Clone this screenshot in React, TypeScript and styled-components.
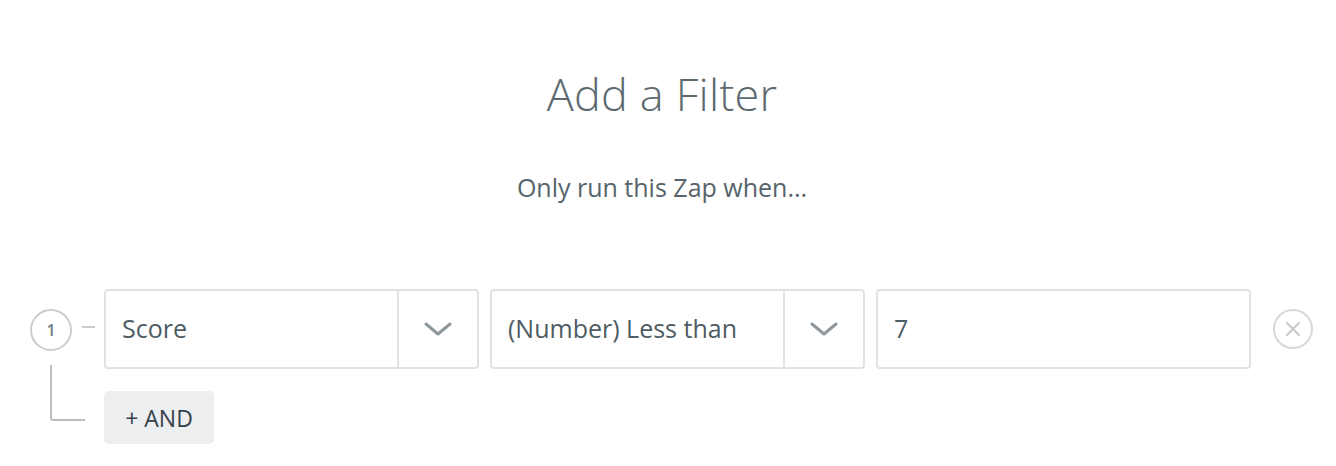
import React from "react";
import styled, { createGlobalStyle } from "styled-components";

const Global = createGlobalStyle`
  html, body { margin: 0; padding: 0; background: #ffffff; }
  body { font-family: "Open Sans", "Liberation Sans", sans-serif; -webkit-font-smoothing: antialiased; }
  * { box-sizing: border-box; }
`;

const Page = styled.div`
  width: 1336px;
  height: 466px;
  padding: 62px 0 0 0;
  display: flex;
  flex-direction: column;
`;

const Header = styled.div`
  display: flex;
  flex-direction: column;
  align-items: center;
  padding-right: 12px;
`;

const Title = styled.h1`
  margin: 0;
  font-weight: 300;
  font-size: 45px;
  line-height: 64px;
  color: #5c6970;
  letter-spacing: 0.2px;
`;

const Subtitle = styled.p`
  margin: 44px 0 0 0;
  font-size: 25px;
  line-height: 34px;
  font-weight: 400;
  color: #56636a;
`;

const Rules = styled.div`
  margin-top: 85px;
  display: grid;
  grid-template-columns: 42px 32px 1fr;
  grid-template-rows: 80px auto;
  row-gap: 22px;
  padding-left: 30px;
  padding-right: 22px;
`;

const Step = styled.div`
  align-self: center;
  width: 42px;
  height: 42px;
  border: 2px solid #c9cdd0;
  border-radius: 50%;
  display: flex;
  align-items: center;
  justify-content: center;
  font-size: 16px;
  font-weight: 600;
  color: #737c81;
  margin-top: 2px;
`;

const Dash = styled.div`
  align-self: center;
  width: 13px;
  height: 2px;
  background: #c9cdd0;
  margin-left: 10px;
  margin-top: -4px;
`;

const Row = styled.div`
  display: flex;
  align-items: center;
  gap: 11px;
`;

const Field = styled.div`
  width: 375px;
  height: 80px;
  border: 2px solid #dfe3e5;
  border-radius: 4px;
  display: flex;
  align-items: stretch;
  background: #fff;
`;

const FieldText = styled.div`
  flex: 1;
  display: flex;
  align-items: center;
  padding-left: 16px;
  padding-bottom: 2px;
  font-size: 25px;
  color: #4e5c64;
`;

const Chevron = styled.div`
  width: 80px;
  border-left: 2px solid #dfe3e5;
  display: flex;
  align-items: center;
  justify-content: center;
`;

const Remove = styled.button`
  margin-left: 11px;
  width: 40px;
  height: 40px;
  border-radius: 50%;
  border: 2px solid #d6d9db;
  background: #fff;
  padding: 0;
  display: flex;
  align-items: center;
  justify-content: center;
  cursor: pointer;
`;

const Connector = styled.div`
  grid-column: 1 / 3;
`;

const Elbow = styled.div`
  margin-left: 20px;
  margin-top: -26px;
  width: 35px;
  height: 56px;
  border-left: 2px solid #b8bec2;
  border-bottom: 2px solid #b8bec2;
  border-bottom-left-radius: 3px;
`;

const AndButton = styled.button`
  justify-self: start;
  width: 110px;
  height: 53px;
  border: none;
  border-radius: 5px;
  background: #eceef0;
  color: #34414a;
  font-family: "Open Sans", "Liberation Sans", sans-serif;
  font-size: 23px;
  font-weight: 400;
  padding: 0;
  cursor: pointer;
`;

const ChevronIcon = () => (
  <svg width="28" height="14" viewBox="0 0 28 14">
    <path d="M2 2 L14 12 L26 2" fill="none" stroke="#8e989d" strokeWidth="3" strokeLinecap="round" strokeLinejoin="round" />
  </svg>
);

const CloseIcon = () => (
  <svg width="16" height="16" viewBox="0 0 16 16">
    <path d="M2 2 L14 14 M14 2 L2 14" fill="none" stroke="#c5c9cc" strokeWidth="2" strokeLinecap="round" />
  </svg>
);

export default function App() {
  return (
    <>
      <Global />
      <Page>
        <Header>
          <Title>Add a Filter</Title>
          <Subtitle>Only run this Zap when...</Subtitle>
        </Header>
        <Rules>
          <Step>1</Step>
          <Dash />
          <Row>
            <Field>
              <FieldText>Score</FieldText>
              <Chevron><ChevronIcon /></Chevron>
            </Field>
            <Field>
              <FieldText>(Number) Less than</FieldText>
              <Chevron><ChevronIcon /></Chevron>
            </Field>
            <Field>
              <FieldText>7</FieldText>
            </Field>
            <Remove aria-label="Remove"><CloseIcon /></Remove>
          </Row>
          <Connector><Elbow /></Connector>
          <AndButton>+ AND</AndButton>
        </Rules>
      </Page>
    </>
  );
}
